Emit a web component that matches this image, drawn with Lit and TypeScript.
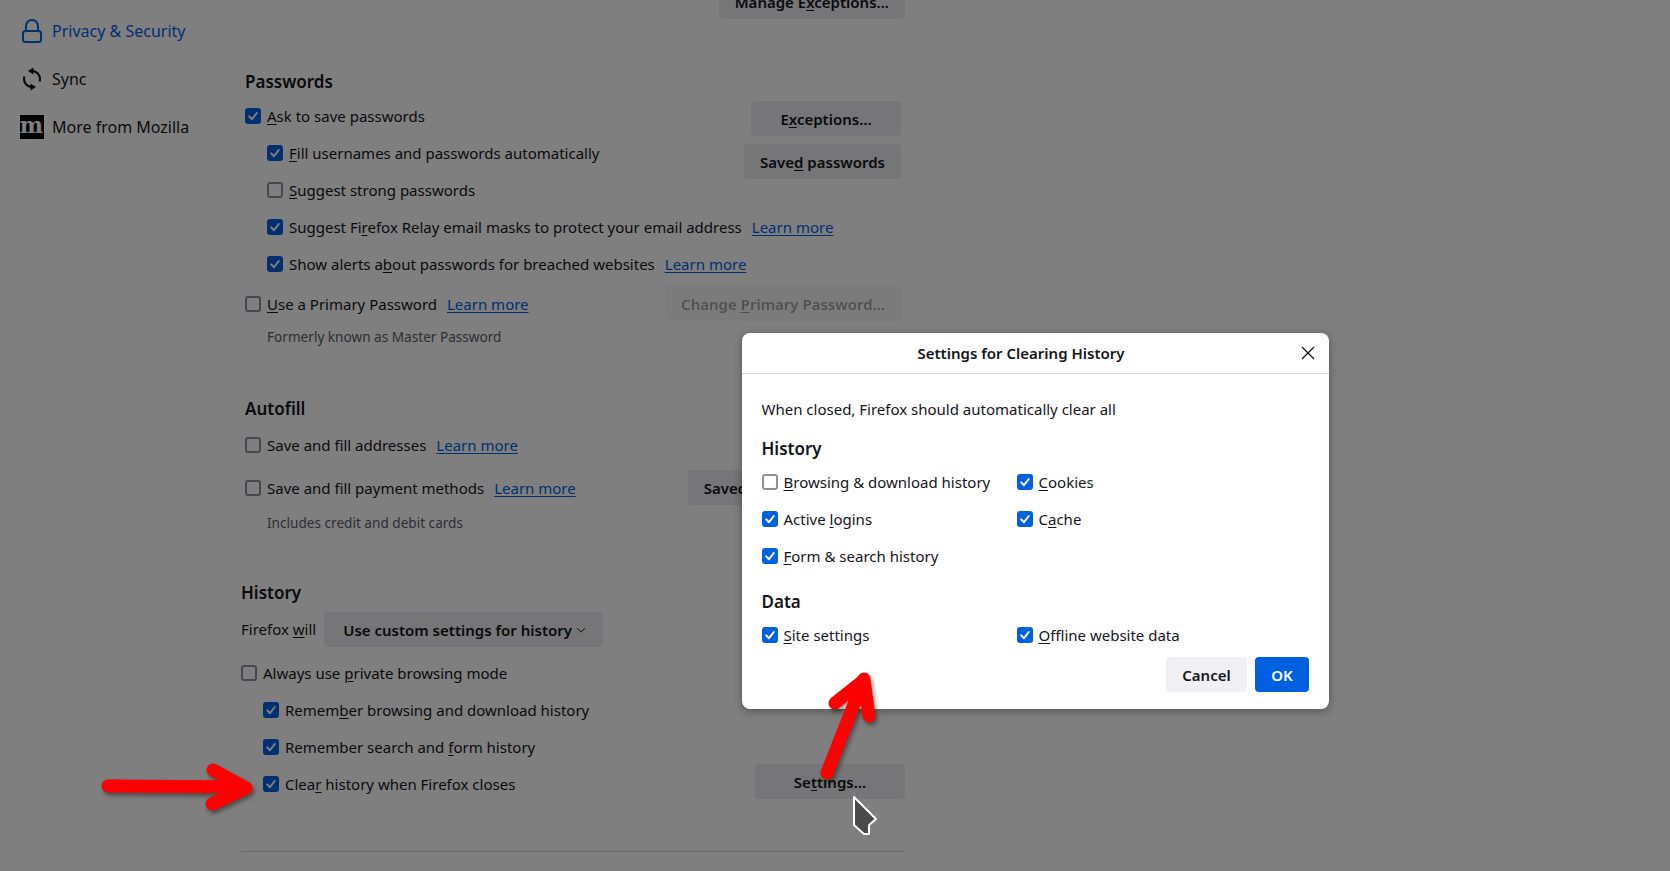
import { LitElement, html, css, nothing, TemplateResult } from 'lit'
import { customElement } from 'lit/decorators.js'
import { classMap } from 'lit/directives/class-map.js'

const check = (label: TemplateResult | string, checked = false, link = false) => html`
  <label class="check">
    <span class="box ${classMap({ on: checked })}">
      ${checked
        ? html`<svg viewBox="0 0 16 16" width="16" height="16"><path d="M4.2 8.4 7 11.2 11.8 5" fill="none" stroke="#fff" stroke-width="2" stroke-linecap="round" stroke-linejoin="round"/></svg>`
        : nothing}
    </span>
    <span>${label}</span>
    ${link ? html`<a class="learn">Learn more</a>` : nothing}
  </label>
`

@customElement('app-root')
export class AppRoot extends LitElement {
  static styles = css`
    :host {
      display: block;
      position: relative;
      height: 871px;
      overflow: hidden;
      background: #fff;
      color: #15141a;
      font-family: "Noto Sans", sans-serif;
      font-size: 15px;
      line-height: 21px;
    }
    u { text-underline-offset: 2px; }
    .page { display: flex; align-items: flex-start; }
    .side { width: 241px; flex: none; padding: 7px 0 0 19px; box-sizing: border-box; }
    .nav { display: flex; align-items: center; height: 48px; gap: 8px; font-size: 16px; }
    .nav.active { color: #0061e0; }
    .nav-icon { width: 25px; height: 24px; display: flex; align-items: center; justify-content: center; flex: none; }
    .moz {
      width: 24px; height: 24px; background: #000; color: #fff;
      font: 700 22px/21px "DejaVu Serif", serif; overflow: hidden;
      text-align: center;
    }
    .main { width: 664px; flex: none; margin-top: -16px; }
    .end { display: flex; justify-content: flex-end; }
    .btn {
      display: inline-block; min-width: 150px; text-align: center;
      height: 35px; line-height: 37px; box-sizing: border-box; padding: 0 16px;
      background: #ececf0; border-radius: 4px; font-weight: 600; white-space: nowrap;
      color: #15141a;
    }
    .btn.off { opacity: .4; }
    .sec { padding: 0 4px; }
    h2 { font-size: 17px; font-weight: 600; line-height: 24px; margin: 0; }
    .check { display: flex; align-items: center; height: 37px; white-space: nowrap; }
    .box {
      width: 16px; height: 16px; box-sizing: border-box; flex: none; margin: -1px 6px 0 0;
      border: 2px solid #8f8f9d; border-radius: 3px; background: #fff;
    }
    .box.on { border: 0; background: #0061e0; }
    .box svg { display: block; }
    .learn { margin-left: 10px; color: #0061e0; text-decoration: underline; text-underline-offset: 2px; }
    .sub { padding-left: 22px; }
    .pw-grid { display: flex; margin-top: 4px; }
    .pw-list { flex: 1; min-width: 0; }
    .stack { flex: none; display: flex; flex-direction: column; align-items: flex-end; gap: 8px; padding-top: 3px; }
    .row { display: flex; align-items: flex-start; justify-content: space-between; }
    .row.up .btn { margin-top: -2px; }
    .note { font-size: 13.6px; color: #5b5b66; padding-left: 22px; line-height: 19px; }
    .will { display: flex; align-items: center; gap: 8px; }
    .select { display: inline-flex; align-items: center; padding: 1px 17px 0 19px; gap: 4px; width: 279px; line-height: 21px; }
    hr { border: 0; border-top: 1px solid #cfcfd8; margin: 0; }

    .shade { position: absolute; inset: 0; background: rgba(0, 0, 0, .5); }
    .dialog {
      position: absolute; left: 742px; top: 333px; width: 587px; height: 376px;
      box-sizing: border-box; background: #fff; border-radius: 8px;
      box-shadow: 0 2px 10px rgba(0, 0, 0, .35);
    }
    .head { display: flex; align-items: center; height: 40px; border-bottom: 1px solid #d7d7db; padding-right: 11px; }
    .title { flex: 1; text-align: center; font-weight: 600; padding-left: 2px; }
    .close { width: 20px; height: 20px; display: flex; align-items: center; justify-content: center; }
    .body { padding: 25px 20px 0 19.5px; }
    .body h2 { margin-top: 17px; }
    .cols { display: grid; grid-template-columns: 255px 1fr; margin-top: 3px; }
    .body .cols + h2 { margin-top: 15px; }
    .foot { display: flex; justify-content: flex-end; gap: 8px; margin-top: 3px; }
    .foot .btn { min-width: 0; }
    .cancel { background: #f0f0f4; width: 81px; }
    .ok { background: #0061e0; color: #fff; width: 54px; }
    .marks { position: absolute; left: 0; top: 0; pointer-events: none; }
    .arrow { filter: drop-shadow(2px 3px 2px rgba(0, 0, 0, .4)); }
  `

  render() {
    return html`
      <div class="page">
        <nav class="side">
          <div class="nav active">
            <span class="nav-icon">
              <svg width="22" height="26" viewBox="0 0 22 26" fill="none" stroke="#0061e0" stroke-width="2">
                <rect x="2" y="13" width="18" height="11" rx="2.5"/>
                <path d="M5 13V8a6 6 0 0 1 12 0v5"/>
              </svg>
            </span>
            Privacy &amp; Security
          </div>
          <div class="nav">
            <span class="nav-icon">
              <svg width="24" height="24" viewBox="0 0 24 24" fill="none" stroke="#15141a" stroke-width="2">
                <path d="M12 4A8 8 0 0 1 19.6 14.5"/>
                <path d="M12 20A8 8 0 0 1 4.4 9.5"/>
                <path d="M8 4 13.5 0.5V7.5z" fill="#15141a" stroke="none"/>
                <path d="M16 20 10.5 16.5V23.5z" fill="#15141a" stroke="none"/>
              </svg>
            </span>
            Sync
          </div>
          <div class="nav">
            <span class="nav-icon"><span class="moz">m</span></span>
            More from Mozilla
          </div>
        </nav>

        <main class="main">
          <div class="end"><span class="btn">Manage E<u>x</u>ceptions…</span></div>

          <section class="sec" style="margin-top:51px">
            <h2>Passwords</h2>
            <div class="pw-grid">
              <div class="pw-list">
                ${check(html`<u>A</u>sk to save passwords`, true)}
                <div class="sub">
                  ${check(html`<u>F</u>ill usernames and passwords automatically`, true)}
                  ${check(html`<u>S</u>uggest strong passwords`)}
                  ${check(html`Suggest Fi<u>r</u>efox Relay email masks to protect your email address`, true, true)}
                  ${check(html`Show alerts a<u>b</u>out passwords for breached websites`, true, true)}
                </div>
              </div>
              <div class="stack">
                <span class="btn">E<u>x</u>ceptions…</span>
                <span class="btn">Save<u>d</u> passwords</span>
              </div>
            </div>
            <div class="row" style="margin-top:3px">
              ${check(html`<u>U</u>se a Primary Password`, false, true)}
              <span class="btn off">Change <u>P</u>rimary Password…</span>
            </div>
            <div class="note" style="margin-top:4px">Formerly known as Master Password</div>
          </section>

          <section class="sec" style="margin-top:51px">
            <h2>Autofill</h2>
            <div style="margin-top:6px">${check('Save and fill addresses', false, true)}</div>
            <div class="row" style="margin-top:6px">
              ${check('Save and fill payment methods', false, true)}
              <span class="btn">Saved payment methods</span>
            </div>
            <div class="note" style="margin-top:6px">Includes credit and debit cards</div>
          </section>

          <section style="margin-top:49px">
            <h2>History</h2>
            <div class="will" style="margin-top:7px">
              <span>Firefox <u>w</u>ill</span>
              <span class="btn select">
                Use custom settings for history
                <svg width="10" height="10" viewBox="0 0 10 10" fill="none" stroke="#15141a" stroke-width="1"><path d="M1 3.2 5 7.2 9 3.2"/></svg>
              </span>
            </div>
            <div style="margin-top:8px">
              ${check(html`Always use <u>p</u>rivate browsing mode`)}
              <div class="sub">
                ${check(html`Remem<u>b</u>er browsing and download history`, true)}
                ${check(html`Remember search and <u>f</u>orm history`, true)}
                <div class="row up">
                  ${check(html`Clea<u>r</u> history when Firefox closes`, true)}
                  <span class="btn">Se<u>t</u>tings…</span>
                </div>
              </div>
            </div>
          </section>
          <hr style="margin-top:48px" />
        </main>
      </div>

      <div class="shade"></div>

      <div class="dialog">
        <div class="head">
          <div class="title">Settings for Clearing History</div>
          <span class="close">
            <svg width="14" height="14" viewBox="0 0 14 14" fill="none" stroke="#15141a" stroke-width="1.3"><path d="M1 1 13 13M13 1 1 13"/></svg>
          </span>
        </div>
        <div class="body">
          <div>When closed, Firefox should automatically clear all</div>
          <h2>History</h2>
          <div class="cols">
            ${check(html`<u>B</u>rowsing &amp; download history`)}
            ${check(html`<u>C</u>ookies`, true)}
            ${check(html`Active <u>l</u>ogins`, true)}
            ${check(html`C<u>a</u>che`, true)}
            ${check(html`<u>F</u>orm &amp; search history`, true)}
          </div>
          <h2>Data</h2>
          <div class="cols">
            ${check(html`<u>S</u>ite settings`, true)}
            ${check(html`<u>O</u>ffline website data`, true)}
          </div>
          <div class="foot">
            <span class="btn cancel">Cancel</span>
            <span class="btn ok">OK</span>
          </div>
        </div>
      </div>

      <svg class="marks" width="1670" height="871" fill="none">
        <g class="arrow" stroke="#ff0000" stroke-width="13" stroke-linecap="round" stroke-linejoin="round">
          <path d="M108 786 244 787M213 770 246 788 212 804"/>
          <path d="M827 773 864 679M835 703 864 680 869 716"/>
        </g>
        <path d="M854 797 876 819 869 825V834H864L854 825z" fill="#4a4a4a" stroke="#fff" stroke-width="2" stroke-linejoin="round"/>
      </svg>
    `
  }
}
